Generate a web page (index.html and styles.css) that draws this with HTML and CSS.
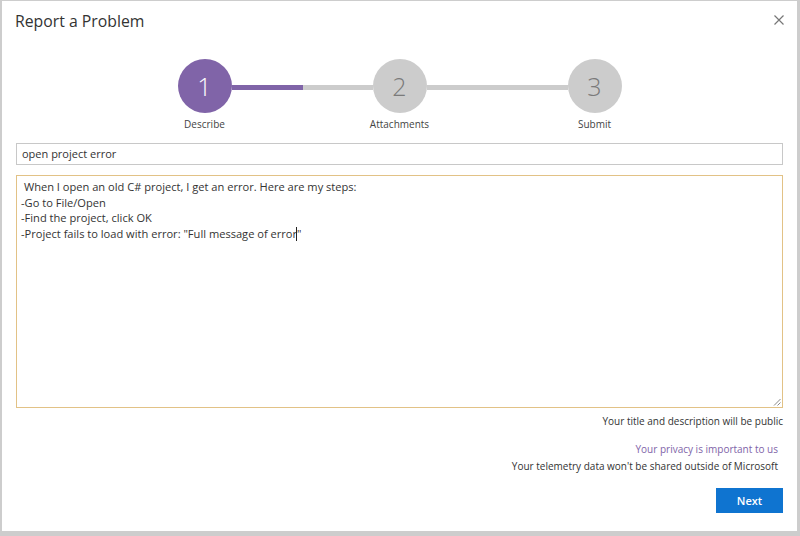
FILE: index.html
```html
<!DOCTYPE html>
<html>
<head>
<meta charset="utf-8">
<link rel="stylesheet" href="styles.css">
</head>
<body>
<div class="dialog">
  <div class="header">
    <h1 class="title">Report a Problem</h1>
    <svg class="close" width="10" height="10" viewBox="0 0 10 10"><path d="M0.5 0.5 L9.5 9.5 M9.5 0.5 L0.5 9.5" stroke="#777" stroke-width="1.2" fill="none"/></svg>
  </div>
  <div class="stepper">
    <div class="step active"><div class="circle">1</div><div class="label">Describe</div></div>
    <div class="connector"><div class="fill"></div></div>
    <div class="step"><div class="circle">2</div><div class="label">Attachments</div></div>
    <div class="connector"></div>
    <div class="step"><div class="circle">3</div><div class="label">Submit</div></div>
  </div>
  <div class="form">
    <div class="input">open project error</div>
    <div class="textarea"><div class="text"> When I open an old C# project, I get an error. Here are my steps:
-Go to File/Open
-Find the project, click OK
-Project fails to load with error: "Full message of error<span class="caret"></span>"</div>
      <svg class="grip" width="8" height="8" viewBox="0 0 8 8"><path d="M7.5 1 L1 7.5 M7.5 4.5 L4.5 7.5" stroke="#888" stroke-width="1" fill="none"/></svg>
    </div>
    <div class="note public">Your title and description will be public</div>
    <div class="privacy">
      <a class="link">Your privacy is important to us</a>
      <div class="note">Your telemetry data won't be shared outside of Microsoft</div>
    </div>
    <div class="actions"><button class="next">Next</button></div>
  </div>
</div>
</body>
</html>
```
FILE: styles.css
```css
html, body {
  margin: 0;
  padding: 0;
}
body {
  background: #cdcdcd;
  width: 800px;
  height: 536px;
  overflow: hidden;
  font-family: "Open Sans", "Noto Sans", sans-serif;
  color: #333;
}
.dialog {
  margin: 1px 3px 0 2px;
  height: 530px;
  background: #fff;
  display: flex;
  flex-direction: column;
}
.header {
  display: flex;
  justify-content: space-between;
  align-items: flex-start;
  padding: 8px 13px 0 13px;
}
.title {
  margin: 0;
  font-size: 15.8px;
  font-weight: 400;
  line-height: 24px;
  color: #333;
}
.close {
  margin-top: 6px;
}
.stepper {
  display: flex;
  justify-content: center;
  margin-top: 26px;
  height: 84px;
}
.step {
  width: 54px;
  display: flex;
  flex-direction: column;
  align-items: center;
}
.circle {
  width: 54px;
  height: 54px;
  border-radius: 50%;
  background: #cccccc;
  color: #7a7a7a;
  font-size: 25px;
  font-weight: 300;
  line-height: 54px;
  text-align: center;
}
.step.active .circle {
  background: #8064a8;
  color: #fff;
}
.label {
  white-space: nowrap;
  font-size: 10px;
  line-height: 14px;
  margin-top: 4px;
  color: #444;
}
.connector {
  width: 141px;
  height: 5px;
  margin-top: 26px;
  background: #cccccc;
}
.connector .fill {
  width: 71px;
  height: 5px;
  background: #8064a8;
}
.form {
  padding: 0 14px 0 14px;
  display: flex;
  flex-direction: column;
}
.input {
  height: 20px;
  border: 1px solid #c8c8c8;
  font-size: 11px;
  line-height: 20px;
  padding: 0 5px;
}
.textarea {
  position: relative;
  margin-top: 10px;
  height: 225px;
  border: 1.5px solid #e2c286;
  padding: 3px 4px;
}
.text {
  white-space: pre-wrap;
  font-size: 11.1px;
  line-height: 15.5px;
}
.caret {
  display: inline-block;
  width: 1px;
  height: 14px;
  margin-left: -1px;
  background: #222;
  vertical-align: -3px;
}
.grip {
  position: absolute;
  right: 1px;
  bottom: 1px;
}
.note {
  font-size: 10px;
  line-height: 14px;
  text-align: right;
  color: #333;
}
.public {
  margin-top: 6px;
}
.privacy {
  margin-top: 14px;
  padding-right: 5px;
  display: flex;
  flex-direction: column;
  align-items: flex-end;
}
.link {
  font-size: 10px;
  line-height: 14px;
  color: #8064a8;
  margin-bottom: 3px;
}
.actions {
  display: flex;
  justify-content: flex-end;
  margin-top: 15px;
}
.next {
  width: 67px;
  height: 25px;
  border: none;
  background: #0f74d0;
  color: #fff;
  font-family: "Open Sans", sans-serif;
  font-size: 11px;
  font-weight: 600;
  padding: 0;
}
```
